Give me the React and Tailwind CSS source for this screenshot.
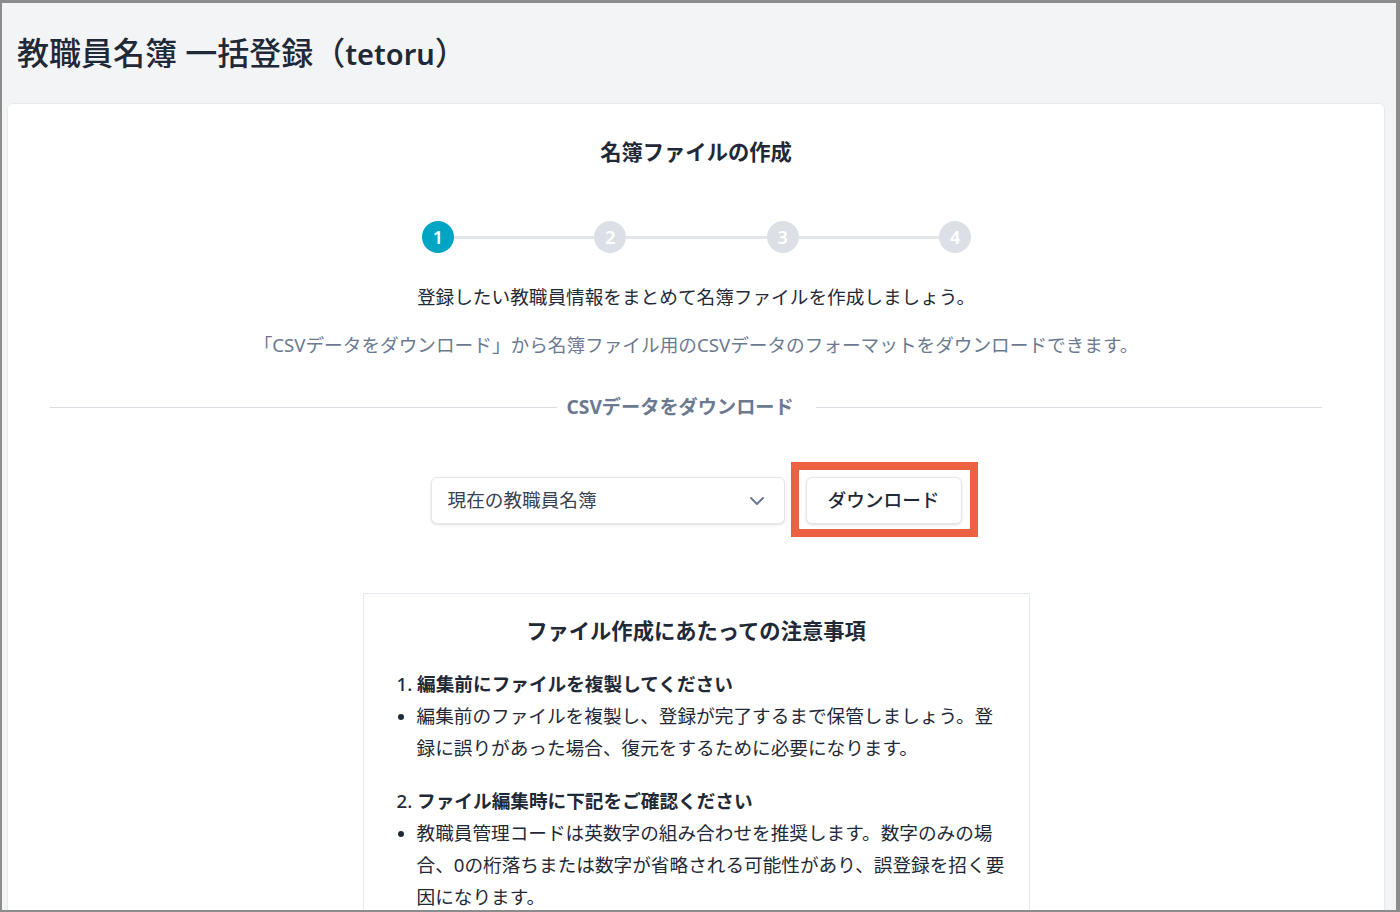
import { ChevronDown } from 'lucide-react';

function Step({ n, active }) {
  return (
    <div className={`w-8 h-8 shrink-0 rounded-full flex items-center justify-center text-[18px] font-semibold text-white ${active ? 'bg-[#00a5c4]' : 'bg-[#dce0e6]'}`}>
      {n}
    </div>
  );
}

function Line() {
  return <div className="w-[140.4px] h-[3px] bg-[#e2e6eb]" />;
}

function Bullet() {
  return (
    <span className="w-[20px] shrink-0 flex pt-[14px]">
      <span className="w-[6px] h-[6px] ml-[1px] rounded-full bg-[#1f2937]" />
    </span>
  );
}

export default function App() {
  return (
    <div className="h-[912px] w-[1400px] overflow-hidden bg-[#f3f4f6] border-t-[3px] border-l-[2px] border-r-[4px] border-b-[2px] border-[#8c8c8c] font-['Noto_Sans','Noto_Sans_CJK_JP',sans-serif] text-[#1f2937]">
      <h1 className="h-[100px] pl-[15px] pt-[26px] text-[32px] leading-[48px] font-medium text-[#1f2937]">
        教職員名簿 一括登録（<span className="text-[29px] font-semibold">tetoru</span>）
      </h1>
      <div className="ml-[5px] mr-[11px] h-[900px] bg-white rounded-md border border-[#e5e9f0] flex flex-col items-center">
        <h2 className="mt-[32px] text-[21.3px] leading-[32px] font-bold text-[#1f2937]">名簿ファイルの作成</h2>
        <div className="mt-[53px] ml-[1px] flex items-center">
          <Step n="1" active />
          <Line />
          <Step n="2" />
          <Line />
          <Step n="3" />
          <Line />
          <Step n="4" />
        </div>
        <p className="mt-[30px] text-[18.65px] leading-[28px] text-[#1f2937]">登録したい教職員情報をまとめて名簿ファイルを作成しましょう。</p>
        <p className="mt-[20px] text-[18.65px] leading-[28px] text-[#6b7a90]">「CSVデータをダウンロード」から名簿ファイル用のCSVデータのフォーマットをダウンロードできます。</p>
        <div className="mt-[34px] w-full pl-[42px] pr-[62px] flex items-center">
          <div className="flex-1 h-px bg-[#d9dde3]" />
          <span className="w-[259px] pl-[10px] text-[19.2px] leading-[28px] font-bold text-[#6b7a90]">CSVデータをダウンロード</span>
          <div className="flex-1 h-px bg-[#d9dde3]" />
        </div>
        <div className="mt-[56px] flex items-center gap-[21px]">
          <div className="w-[354px] h-[47px] pl-4 pr-[15px] pb-[2px] flex items-center justify-between rounded-md border border-[#e3e6ec] bg-white shadow-sm text-[18.65px] text-[#374151]">
            <span>現在の教職員名簿</span>
            <ChevronDown className="w-[24px] h-[24px] mt-[2px] text-[#6b7a90]" strokeWidth={2} />
          </div>
          <div className="relative w-[156px] h-[47px] pb-[2px] flex items-center justify-center rounded-md border border-[#e3e6ec] bg-white shadow-sm text-[18.65px] font-medium text-[#1f2937]">
            ダウンロード
            <div className="absolute -left-[16px] -right-[17px] -top-[16px] -bottom-[14px] border-[8px] border-[#ec6141]" />
          </div>
        </div>
        <div className="mt-[69px] w-[667px] border border-[#e5e9f0] px-[33px] pt-[21px] pb-8">
          <h3 className="text-center text-[21.3px] leading-[32px] font-bold text-[#1f2937]">ファイル作成にあたっての注意事項</h3>
          <ol className="mt-[21px] mr-[-11px] text-[18.65px] leading-[32px]">
            <li>
              <p className="font-bold"><span className="font-medium">1. </span>編集前にファイルを複製してください</p>
              <div className="flex">
                <Bullet />
                <p>編集前のファイルを複製し、登録が完了するまで保管しましょう。登録に誤りがあった場合、復元をするために必要になります。</p>
              </div>
            </li>
            <li className="mt-[21px]">
              <p className="font-bold"><span className="font-medium">2. </span>ファイル編集時に下記をご確認ください</p>
              <div className="flex">
                <Bullet />
                <p>教職員管理コードは英数字の組み合わせを推奨します。数字のみの場合、0の桁落ちまたは数字が省略される可能性があり、誤登録を招く要因になります。</p>
              </div>
            </li>
          </ol>
        </div>
      </div>
    </div>
  );
}
